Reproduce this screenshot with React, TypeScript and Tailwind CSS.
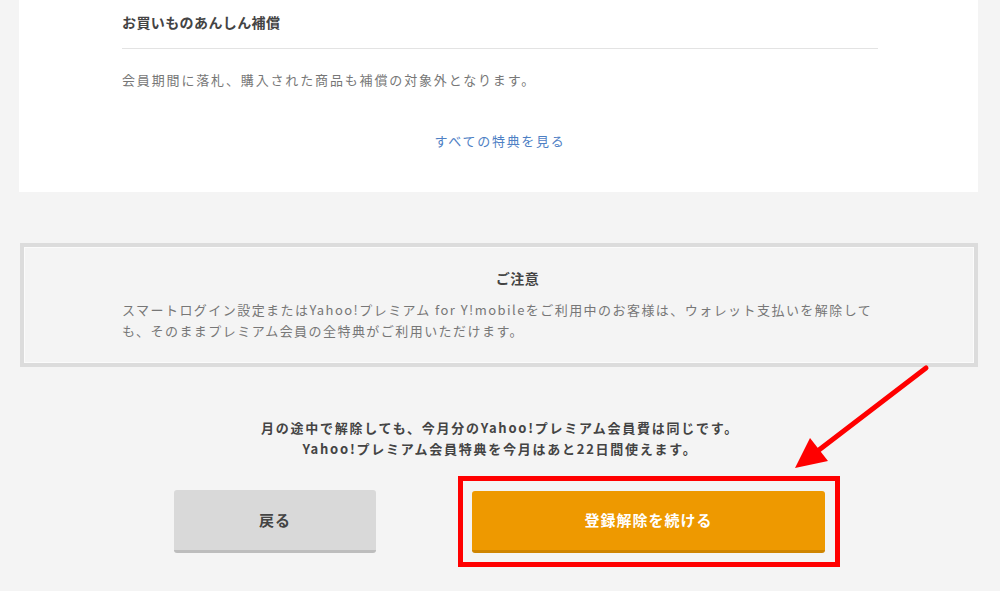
import React from "react";

const font = { fontFamily: '"Noto Sans CJK JP", "Noto Sans", sans-serif' };

export default function App() {
  return (
    <div
      className="relative w-[1000px] h-[591px] overflow-hidden bg-[#f4f4f4] text-[#333]"
      style={font}
    >
      {/* Card */}
      <div className="ml-[19px] w-[959px] bg-white pl-[103px] pr-[100px] pt-[12px] pb-[41px]">
        <div className="text-[14px] leading-[20px] font-bold tracking-[0.4px] text-[#444] pb-[16px] border-b border-[#e3e3e3]">
          お買いものあんしん補償
        </div>
        <div className="mt-[21px] text-[13px] leading-[20px] tracking-[1.85px] text-[#777]">
          会員期間に落札、購入された商品も補償の対象外となります。
        </div>
        <div className="mt-[41px] text-center text-[13px] leading-[20px] tracking-[1.7px] text-[#4e80c4]">
          すべての特典を見る
        </div>
      </div>

      {/* Notice */}
      <div className="mt-[51px] ml-[20px] w-[958px] h-[124px] border-[4px] border-[#dcdcdc]">
        <div className="h-full border border-[#fbfbfb] pl-[97px] pr-[60px] pt-[20px]">
          <div className="text-center text-[14px] leading-[20px] font-bold text-[#444] tracking-[0.5px]">
            ご注意
          </div>
          <div className="mt-[11px] text-[13px] leading-[21px] tracking-[1.45px] text-[#777]">
            <div className="whitespace-nowrap">
              スマートログイン設定またはYahoo!プレミアム for Y!mobileをご利用中のお客様は、ウォレット支払いを解除して
            </div>
            <div className="whitespace-nowrap">
              も、そのままプレミアム会員の全特典がご利用いただけます。
            </div>
          </div>
        </div>
      </div>

      {/* Bottom text */}
      <div className="mt-[50px] text-center text-[13px] leading-[21px] font-bold tracking-[1.75px] text-[#444]">
        <div>月の途中で解除しても、今月分のYahoo!プレミアム会員費は同じです。</div>
        <div>Yahoo!プレミアム会員特典を今月はあと22日間使えます。</div>
      </div>

      {/* Buttons */}
      <div className="mt-[17px] flex items-center pl-[174px] gap-[82px]">
        <button
          className="w-[202px] h-[63px] rounded-[3px] bg-[#d9d9d9] border-b-[3px] border-[#bdbdbd] text-[15px] font-bold text-[#444] tracking-[1px]"
          style={font}
        >
          戻る
        </button>
        <div className="border-[5px] border-[#f00] pt-[10px] pb-[9px] pl-[9px] pr-[10px]">
          <button
            className="block w-[353px] h-[62px] rounded-[3px] bg-[#ee9900] border-b-[3px] border-[#cf8500] text-[15px] font-bold text-white tracking-[1px]"
            style={font}
          >
            登録解除を続ける
          </button>
        </div>
      </div>

      {/* Arrow annotation */}
      <svg
        className="absolute left-0 top-0 pointer-events-none"
        width="1000"
        height="591"
        viewBox="0 0 1000 591"
      >
        <line x1="926" y1="368" x2="815" y2="453" stroke="#f00" strokeWidth="5" strokeLinecap="round" />
        <polygon points="795,468 810,438 828,461" fill="#f00" />
      </svg>
    </div>
  );
}
